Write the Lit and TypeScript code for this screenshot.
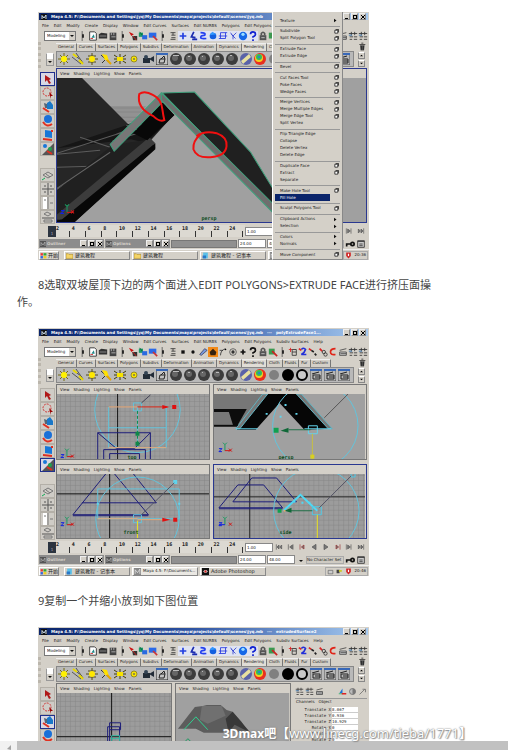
import { LitElement, html, svg, css, nothing } from "lit";
import { customElement, property } from "lit/decorators.js";
import { classMap } from "lit/directives/class-map.js";

const icon = (body: unknown) => html`<svg class="ico" viewBox="0 0 12 12" aria-hidden="true">${body}</svg>`;

/* ---------- status line glyphs ---------- */
const statusGlyphs: Record<string, unknown> = {
  doc: svg`<path d="M2 1h6l2 2v8H2z" fill="#fff" stroke="#222"/><path d="M4 8l3-4 1 4z" fill="#288"/><path d="M3 9h3" stroke="#c22"/>`,
  open: svg`<path d="M1 4l3-2 7 1v6H1z" fill="#333"/><path d="M2 6h8" stroke="#999"/>`,
  save: svg`<path d="M2 2h8v9H2z" fill="#444"/><path d="M4 2v3M7 2v3M4 7h5" stroke="#bbb"/>`,
  arrowRed: svg`<path d="M1 1l6 3-3 2z" fill="#c11"/><path d="M5 6h6v5H6z" fill="#333"/><path d="M6 6l4 5" stroke="#d22"/>`,
  cubes: svg`<path d="M1 2h5v5H1z" fill="#1a9a6a"/><path d="M5 5h6v5H5z" fill="#2a6ae0"/><path d="M2 1l3 4" stroke="#063"/>`,
  blueBox: svg`<path d="M1 2h9v6H1z" fill="#2a6ae8"/><path d="M6 6l5 5" stroke="#c33" stroke-width="2"/>`,
  mask: svg`<path d="M3 2h6M3 10h6M6 2v3M4 5h5M4 8h5" stroke="#333"/>`,
  plus: svg`<path d="M6 2v8M2 6h8" stroke="#2440e0" stroke-width="2"/>`,
  joint: svg`<path d="M7 1L4 7l5 1M5 10h6" stroke="#1c2cb0" stroke-width="2" fill="none"/>`,
  curve: svg`<path d="M3 2q7 0 5 3l-4 1q-3 4 6 3" stroke="#2440f0" stroke-width="2" fill="none"/>`,
  ball: svg`<circle cx="6" cy="6" r="4" fill="#1460e0"/><path d="M2 5l3-4 5 3" fill="#39f"/>`,
  lattice: svg`<path d="M3 2h8M1 9h8M3 2v7M9 2v7M1 6h10" stroke="#2436e0" fill="none"/>`,
  spray: svg`<path d="M3 2l3 4 4-4M6 6v4M4 4l5 5" stroke="#3040d0" fill="none"/>`,
  render: svg`<circle cx="6" cy="6" r="5" fill="#1668e8"/><circle cx="6" cy="4" r="2" fill="#9df"/>`,
  help: svg`<path d="M3 4q0-3 3-3t3 3q0 2-3 3v1M6 10v2" stroke="#1020d0" stroke-width="2" fill="none"/>`,
  helpBlack: svg`<path d="M3 4q0-3 3-3t3 3q0 2-3 3v1M6 10v2" stroke="#111" stroke-width="2" fill="none"/>`,
  lock: svg`<path d="M4 5V3q2-3 4 0v2" stroke="#555" fill="none" stroke-width="2"/><path d="M2 5h8v6H2z" fill="#555"/><path d="M4 8h4" stroke="#ccc"/>`,
  pick: svg`<path d="M1 2h7v7H1z" fill="#3a9a50"/><path d="M5 5l6 6" stroke="#c22" stroke-width="2"/>`,
  list: svg`<path d="M1 3h4M3 1v5" stroke="#d22"/><path d="M5 3h5v7H5zM5 6h5" stroke="#333" fill="none"/>`,
  two: svg`<path d="M4 3q3-3 5 0-1 4-5 6h6" stroke="#2330d8" stroke-width="2" fill="none"/><path d="M1 2l3 2" stroke="#d22" stroke-width="2"/>`,
  chain: svg`<path d="M1 2l3 2" stroke="#d22" stroke-width="2"/><path d="M4 4l3 2M8 8l2 2" stroke="#222" stroke-width="2"/>`,
  chain2: svg`<path d="M2 2l3 3" stroke="#d22" stroke-width="2"/><circle cx="7" cy="6" r="2" fill="none" stroke="#333"/><circle cx="9" cy="9" r="2" fill="none" stroke="#333"/>`,
  magnet: svg`<path d="M9 2Q3 2 3 6t6 3" stroke="#e02418" stroke-width="2" fill="none"/>`,
  clap: svg`<path d="M2 4l8-2M2 6h8v4H2z" stroke="#444" fill="#ccc"/><path d="M3 8h7" stroke="#444"/>`,
  grid: svg`<path d="M1 3h10M4 1v4M8 1v4M2 7h4M7 7h4M2 10h3M7 10h4" stroke="#333"/><path d="M1 5h4" stroke="#26a"/>`,
  dot: svg`<path d="M4 4h4v4H4z" fill="#111"/>`,
  disc: svg`<circle cx="6" cy="6" r="2" fill="#111"/>`,
  pen: svg`<path d="M2 9l6-7 3 2-7 6z" fill="#79d" stroke="#446"/>`,
  snap: svg`<path d="M0 0h12v12H0z" fill="#f28a18"/><path d="M6 2l4 4-1 4H3L2 6z" fill="#321"/>`,
  target: svg`<circle cx="6" cy="6" r="4" fill="none" stroke="#555"/><circle cx="6" cy="6" r="2" fill="#333"/>`,
  plusBlack: svg`<path d="M6 3v6M3 6h6" stroke="#111" stroke-width="2"/>`,
  spline: svg`<path d="M3 10q0-6 6-8M2 4h4" stroke="#333" fill="none"/><circle cx="9" cy="3" r="1"/>`,
  bar: svg`<path d="M5 0v12" stroke="#555"/><path d="M5 4h2v4H5z" fill="#111"/>`,
};
const leadGlyphs = ["bar", "doc", "open", "save", "bar", "arrowRed", "cubes", "blueBox", "bar", "mask"];
const objectGlyphs = ["plus", "joint", "curve", "ball", "lattice", "spray", "render", "help"];
const componentGlyphs = ["dot", "disc", "pen", "snap", "spline", "target", "plusBlack", "helpBlack"];
const tailGlyphs = ["lock", "pick", "bar", "list", "two", "chain", "chain2", "magnet", "clap", "grid", "grid"];

/* ---------- shelf glyphs ---------- */
const rays = "M6 0v12M0 6h12M2 2l8 8M10 2l-8 8";
const sphere = (top: string) => svg`<circle cx="6" cy="6" r="6" fill="#3c3c3c"/><circle cx="5" cy="5" r="3" fill="#666"/><path d=${top} fill="#bbb"/>`;
const clapper = svg`<path d="M0 0h12v12H0z" fill="#b8b8b8" stroke="#555"/><path d="M0 1h12" stroke="#3868b8" stroke-width="2"/><path d="M2 5l7-2M3 6h7v4H3zM5 8h5" stroke="#222" fill="none"/>`;
const shelfGlyphs = [
  svg`<path d=${rays} stroke="#776a10"/><circle cx="6" cy="6" r="3" fill="#fff200"/>`,
  svg`<path d="M1 1l9 7M4 0l7 10M0 4l9 7" stroke="#555"/><path d="M1 1l4 3M7 7l4 4" stroke="#e8d800" stroke-width="2"/>`,
  svg`<path d="M6 0v12M0 6h12M2 3h8M2 9h8" stroke="#554c10"/><circle cx="6" cy="6" r="3" fill="#ffe800"/>`,
  svg`<path d="M1 2l10 9M2 10l5-5" stroke="#333"/><path d="M2 1l5 1 2 6-4-1z" fill="#ffe100"/><path d="M7 7l4 4" stroke="#e8a800" stroke-width="2"/>`,
  svg`<path d="M0 2l12 8M12 2L0 10M0 6h12M6 1v10" stroke="#443c00"/><path d="M3 4h6v4H3z" fill="#f8e400"/>`,
  svg`<circle cx="6" cy="6" r="3" fill="#f8e400" stroke="#998c20"/><circle cx="6" cy="6" r="1" fill="#775"/>`,
  svg`<path d="M1 5h7v5H1z" fill="#222c38"/><path d="M7 6l5-3v6z" fill="#222c38"/><circle cx="4" cy="4" r="2" fill="#345"/>`,
  svg`<path d="M0 0h12v12H0z" fill="#c4c4c4" stroke="#222"/><path d="M0 1h12" stroke="#3868b8" stroke-width="2"/><path d="M3 10l1-4h5l-1 4zM5 6l3-3 1 3" stroke="#222" fill="none"/>`,
  sphere("M3 2h6v1H3z"),
  sphere("M4 3h2v1H4z"),
  sphere("M4 3h1v1H4z"),
  sphere("M4 3h3v1H4z"),
  sphere("M4 2h2v1H4z"),
  svg`<circle cx="6" cy="6" r="6" fill="#5a62a8"/><path d="M1 8l8-7 2 3-8 7z" fill="#e8e0a0"/>`,
  svg`<circle cx="6" cy="6" r="6" fill="#e83020"/><circle cx="5" cy="5" r="4" fill="#f0d020"/><circle cx="5" cy="4" r="3" fill="#30b860"/><circle cx="5" cy="4" r="1" fill="#2878e0"/>`,
  svg`<circle cx="6" cy="6" r="5" fill="#808080"/>`,
  svg`<circle cx="6" cy="6" r="6" fill="#000"/>`,
  svg`<circle cx="6" cy="6" r="5" fill="#c8c8c8" stroke="#000" stroke-width="2"/>`,
  clapper,
  clapper,
  clapper,
];

/* ---------- toolbox glyphs ---------- */
const toolGlyphs = [
  { name: "Select", body: svg`<path d="M3 2l6 4-2 1 2 3-2 1-2-4-2 2z" fill="#b01818"/>` },
  { name: "Lasso", body: svg`<circle cx="5" cy="5" r="4" fill="none" stroke="#d03838" stroke-dasharray="2 1"/><path d="M7 5l4 4-2 0 0 3z" fill="#900"/>` },
  { name: "Move", body: svg`<path d="M5 2l3-2 3 4v4H5z" fill="#1a78c8"/><path d="M2 2l3 1v4H3z" fill="#567"/><path d="M1 7l6 4" stroke="#e03020" stroke-width="2"/>` },
  { name: "Rotate", body: svg`<circle cx="6" cy="4" r="4" fill="#1a70d8"/><path d="M1 7q4 6 9 2" stroke="#e03020" stroke-width="2" fill="none"/>` },
  { name: "Scale", body: svg`<path d="M3 1l7 1v7l-7-1z" fill="#1878d8"/><path d="M1 10l9 1M9 2l2 0" stroke="#e03020" stroke-width="2"/>` },
  { name: "Manipulator", body: svg`<path d="M0 12L12 0v12z" fill="#555"/><circle cx="3" cy="3" r="2" fill="#1878d8"/><circle cx="8" cy="6" r="2" fill="#20a050"/><path d="M5 8l5 3" stroke="#e03020" stroke-width="2"/>` },
];
const layoutGlyphs = [
  svg`<path d="M1 6l5-3 5 3-5 3zM4 5l4 3" fill="none" stroke="#777"/><path d="M0 11l3-2" stroke="#1a5"/>`,
  svg`<path d="M6 0v12M0 6h12M2 3h2M8 3h2M2 9h2M8 9h2" stroke="#555"/>`,
  svg`<path d="M1 0h4v12H1z" fill="#fff"/><path d="M6 0v12M8 6h3M2 3h2" stroke="#777"/>`,
  svg`<path d="M0 7h12" stroke="#555"/><path d="M2 3l3-2 4 2-3 2zM2 9h8v2H2z" fill="none" stroke="#777"/>`,
];

/* ---------- viewport drawings ---------- */
const axes = (x: number, y: number, side = false) => svg`
  <g fill="none">
    <path d="M${x} ${y}v-6" stroke="#1a9a60"/>
    <path d=${side ? `M${x} ${y}h-6` : `M${x} ${y}h6`} stroke=${side ? "#1020e0" : "#d01818"}/>
    <path d="M${x - 2} ${y - 8}l2 2 2-2" stroke="#1a9a60"/>
    <path d="M${x - 6} ${y - 2}h3l-3 3h3" stroke="#1020e0"/>
    <path d="M${x + 4} ${y - 2}l3 3m0-3l-3 3" stroke="#d01818"/>
  </g>`;
const grid = (id: string) => svg`
  <defs><pattern id=${id} width="5" height="5" patternUnits="userSpaceOnUse">
    <path d="M0 0h5v5H0z" fill="#9c9c9c"/><path d="M0 0v5M0 0h5" stroke="#868686"/>
  </pattern></defs>`;

const roofScene = svg`
  <path d="M57 78h308v146H57z" fill="#a0a0a0"/>
  <path d="M98 106h48l-18 20h-8z" fill="#929292"/>
  <path d="M104 108h40M108 112h33M112 117h26M117 121h18" stroke="#858585"/>
  <path d="M57 78h25l46 46 33-12 12 3-25 28-91 81z" fill="#262626"/>
  <path d="M57 148l72-24 36-14 9 5-28 28-15-4z" fill="#161616"/>
  <path d="M57 153l75-24M57 167l34-1M57 189l62-38M80 137l30 10M126 125l24 10M116 134l40-15M112 141l38-12M100 150l-43 4" stroke="#5c5c5c" fill="none"/>
  <path d="M57 190l55-45 38-6 5 8-83 77H57z" fill="#202020"/>
  <path d="M57 188l53-36" stroke="#666"/>
  <path d="M149 137l6 6-93 76-5 0v-5z" fill="#3c3c3c"/>
  <path d="M155 143v6L72 224H57v-4l5-1z" fill="#080808"/>
  <path d="M162 102l12 13-27 25-14-7z" fill="#080808"/>
  <path d="M161 93l4 6-51 52-4-7z" fill="#777" stroke="#3fa07c"/>
  <path d="M162 93l32-1 56 60 22 36v18z" fill="#202020" stroke="#3fa07c"/>
  <path d="M161 93l111 110v9L161 100z" fill="#6e6e6e" stroke="#3fa07c"/>
  <path d="M139 94q5-4 14 1 8 4 9 14 1 7 2 11-5 2-11-4-17-8-14-22z" fill="none" stroke="#f01010" stroke-width="2"/>
  <path d="M196 136q8-6 20-3 11 4 10 13-1 10-16 11-14 1-17-8-1-8 7-15" fill="none" stroke="#f01010" stroke-width="2"/>
  ${axes(67, 212)}
  <text class="cam" x="201" y="220">persp</text>`;

const topScene = svg`${grid("g-top")}
  <path d="M57 393h156v70H57z" fill="url(#g-top)"/>
  <path d="M118 393v70" stroke="#111" stroke-width="1"/>
  <g fill="none" stroke="#62c4dc"><circle cx="138" cy="409" r="43"/><path d="M109 406v41h58v-41M109 427h58M138 406v41M134 402h8v8h-8z"/></g>
  <path d="M98 432h53v32H98zM98 432l19 16h18l16-16M104 463v-14h42v14M110 463v-10h30v10" stroke="#1c1c78" fill="none"/>
  <path d="M109 406h29M109 447h58" stroke="#e8a878"/>
  <path d="M138 410v35" stroke="#108848" stroke-dasharray="3 2"/><path d="M136 431h4v4h-4zM136 441h4v4h-4z" fill="#108848"/>
  <path d="M138 406h30" stroke="#e02818"/><path d="M163 404l7 2-7 2zM173 404h4v4h-4z" fill="#e01010"/>
  <path d="M142 402l9-8" stroke="#445"/>
  ${axes(67, 456)}<text class="cam" x="128" y="458">top</text>`;

const perspScene = svg`
  <path d="M215 393h152v70H215z" fill="#a0a0a0"/>
  <path d="M215 393h55l-28 31h-27z" fill="#777"/>
  <path d="M215 408h33l-9 16h-5l-4-13h-15zM215 424h26v2h-26z" fill="#0c0c0c"/>
  <path d="M264 393h35l34 35-27 1-25-27-24 27h-19z" fill="#060606"/>
  <path d="M264 393h5l-28 35-4 0zM298 393h5l31 35h-4z" fill="#777" stroke="#62b4c4"/>
  <circle cx="317" cy="425" r="43" fill="none" stroke="#62c4dc"/>
  <path d="M237 428h22M306 428h27M310 425h9v8h-9z" fill="none" stroke="#62d4ec"/>
  <path d="M286 403h2v2h-2zM297 412h2v2h-2zM281 415h2v2h-2zM267 412h2v2h-2z" fill="#62d4ec"/>
  <path d="M290 429h22" stroke="#207048"/><path d="M275 427h5v5h-5z" fill="#10a050"/><path d="M282 430l8-3v5z" fill="#106838"/>
  <path d="M326 417l24-24" stroke="#555"/><path d="M314 433v30" stroke="#c8c040"/><path d="M312 454h4v4h-4z" fill="#d8d020"/>
  ${axes(226, 450)}<text class="cam" x="280" y="458">persp</text>`;

const frontScene = svg`${grid("g-front")}
  <path d="M57 474h156v66H57z" fill="url(#g-front)"/>
  <path d="M110 474v66M57 494h156" stroke="#111"/>
  <path d="M106 474l-33 41h76l-34-41M134 474l23 29H82M73 516h76" stroke="#1c1c78" fill="none"/>
  <g fill="none" stroke="#62c4dc"><circle cx="138" cy="519" r="42"/><path d="M98 489h82v30H98zM134 515h8v8h-8z"/></g>
  <path d="M174 480h4v4h-4zM179 503h2v2h-2zM97 503h2v2h-2z" fill="#62d4ec"/>
  <path d="M142 515l33-32" stroke="#556"/>
  <path d="M98 519h40" stroke="#e8a878"/><path d="M138 520h30" stroke="#e8a878"/><path d="M163 518l8 2-8 2zM174 518h4v4h-4z" fill="#e01010"/>
  <path d="M138 521v19" stroke="#e8e020"/>
  ${axes(67, 525)}<text class="cam" x="124" y="534">front</text>`;

const sideScene = svg`${grid("g-side")}
  <path d="M215 474h152v66H215z" fill="url(#g-side)"/>
  <path d="M251 474v66M215 497h152" stroke="#222"/>
  <path d="M220 508l19-23h26l19 23zM234 502l19-24h25l20 24zM220 509h64" stroke="#1c1c78" fill="none"/>
  <circle cx="318" cy="511" r="43" fill="none" stroke="#62c4dc"/>
  <path d="M285 511l17-16 17 16" fill="none" stroke="#50d8f4" stroke-width="2"/>
  <path d="M314 507h9v8h-9zM353 473h4v4h-4z" fill="none" stroke="#50c8e4"/>
  <path d="M295 501h2v2h-2zM303 502h2v2h-2zM310 502h2v2h-2z" fill="#50d8f4"/>
  <path d="M292 511h22" stroke="#207048"/><path d="M279 509h4v4h-4z" fill="#10a050"/><path d="M286 511l7-3v5z" fill="#106838"/><circle cx="286" cy="511" r="1" fill="#e8a860"/>
  <path d="M321 508l32-32" stroke="#556"/><path d="M319 515v24" stroke="#e8e020"/>
  ${axes(226, 525, true)}<text class="cam" x="281" y="534">side</text>`;

const planScene = svg`${grid("g-plan")}
  <path d="M57 692h120v150H57z" fill="url(#g-plan)"/>
  <path d="M112 692v150M57 736h120" stroke="#111"/>
  <path d="M110 722h11v7h-11zM108 726h12v16h-12zM110 729v12" fill="none" stroke="#1c1c78"/>
  <path d="M112 735h8v6h-8zM112 738h8" fill="none" stroke="#30b8a0"/>`;

const houseScene = svg`
  <path d="M179 692h114v150H179z" fill="#a0a0a0"/>
  <path d="M181 728l17-22 8-1 4-1h14l6 5 6 2 9 10 9 14-17-5-10-2v4h-20l-8-4z" fill="#5c5c5c"/>
  <path d="M205 705h20l4 10-18 8-8-4z" fill="#707070"/>
  <path d="M236 711l18 21-16-8-6 8-3-14z" fill="#383838"/>
  <path d="M187 729l12-13 12 13" fill="none" stroke="#30d090"/>
  <path d="M188 741l3-3 3 3" stroke="#1a9a60" fill="none"/>`;

interface Pane { box: string; drawing: unknown; active?: boolean; }

type Command = { label: string; box?: boolean; sub?: boolean; on?: boolean };
const polygonMenu: Command[][] = [
  [{ label: "Texture", sub: true }],
  [{ label: "Subdivide", box: true }, { label: "Split Polygon Tool", box: true }],
  [{ label: "Extrude Face", box: true }, { label: "Extrude Edge", box: true }],
  [{ label: "Bevel", box: true }],
  [{ label: "Cut Faces Tool", box: true }, { label: "Poke Faces", box: true }, { label: "Wedge Faces", box: true }],
  [{ label: "Merge Vertices", box: true }, { label: "Merge Multiple Edges", box: true }, { label: "Merge Edge Tool", box: true }, { label: "Split Vertex" }],
  [{ label: "Flip Triangle Edge" }, { label: "Collapse" }, { label: "Delete Vertex" }, { label: "Delete Edge" }],
  [{ label: "Duplicate Face", box: true }, { label: "Extract", box: true }, { label: "Separate" }],
  [{ label: "Make Hole Tool", box: true }, { label: "Fill Hole", on: true }],
  [{ label: "Sculpt Polygons Tool", box: true }],
  [{ label: "Clipboard Actions", sub: true }, { label: "Selection", sub: true }],
  [{ label: "Colors", sub: true }, { label: "Normals", sub: true }],
  [{ label: "Move Component", box: true }],
];

@customElement("maya-window")
export class MayaWindow extends LitElement {
  @property() selection = "";
  @property() clock = "";
  @property({ type: Number }) tool = 0;
  @property({ type: Boolean }) components = false;
  @property({ type: Boolean }) menuOpen = false;
  @property({ type: Boolean }) channels = false;
  @property({ type: Boolean }) timeline = false;
  @property({ attribute: false }) panes: Pane[] = [];
  @property({ attribute: false }) tasks: { label: string; kind: string; on?: boolean }[] = [];

  static styles = css`
    :host { display: flex; flex-direction: column; position: relative; overflow: hidden;
      background: #d4d0c8; color: #222; font: 4px/6px "DejaVu Sans", "Noto Sans CJK SC", sans-serif; white-space: nowrap; }
    * { box-sizing: border-box; }
    button, input, select { font: inherit; color: inherit; margin: 0; padding: 0; border: 0; background: none; border-radius: 0; min-width: 0; }
    svg { display: block; }
    .ico { width: 10px; height: 10px; flex: none; }
    .title { display: flex; align-items: center; height: 9px; flex: none; gap: 4px; padding: 0 2px; border: 1px solid #d4d0c8;
      background: linear-gradient(90deg, #0a246a, #2a50a0 45%, #a6caf0); color: #fff; font-weight: bold; }
    .title .ico { width: 6px; height: 6px; }
    .caps { margin-left: auto; display: flex; gap: 1px; }
    .cap { width: 7px; height: 7px; background: #d4d0c8; border: 1px solid #888; border-top-color: #eee; border-left-color: #eee; display: grid; place-items: center; }
    .cap svg { width: 4px; height: 4px; }
    .menus { display: flex; gap: 5px; height: 9px; flex: none; align-items: center; padding-left: 4px; }
    .status { display: flex; height: 12px; flex: none; align-items: center; padding: 0 3px 0 6px; }
    .picker { position: relative; width: 32px; height: 10px; display: flex; flex: none; }
    .picker select { appearance: none; width: 100%; background: #fff; border: 1px solid #777; padding-left: 2px; }
    .picker i { position: absolute; right: 1px; top: 1px; width: 6px; height: 8px; background: #d4d0c8; display: grid; place-items: center; }
    .picker i::after, .down::after { content: ""; border: 2px solid transparent; border-top-color: #111; border-bottom: 0; }
    .tools { flex: 1; display: flex; justify-content: space-between; padding-left: 2px; }
    .tools button.lit { background: #dfe3f2; }
    .bench { display: flex; height: 26px; flex: none; }
    .gutter { width: 18px; flex: none; border-left: 3px dotted #bbb6ac; display: flex; align-items: flex-end; padding: 0 2px 2px 5px; }
    .down { width: 9px; height: 13px; border: 1px solid #999; border-top-color: #fff; background: linear-gradient(#fff 45%, #d4d0c8 0); display: grid; place-items: end center; padding-bottom: 2px; }
    .shelves { flex: 1; min-width: 0; }
    .tabs { display: flex; height: 9px; align-items: center; }
    .tabs button { padding: 0 2px; height: 8px; border-right: 1px solid #777; border-top: 1px solid #eee; }
    .tabs button.on { background: #e0ddd6; }
    .shelf { display: flex; height: 16px; border: 1px solid #888; background: #b9b9b9; }
    .shelf button { width: 14px; height: 14px; flex: none; display: grid; place-items: center; }
    .shelf .ico { width: 12px; height: 12px; }
    .ends { width: 15px; flex: none; display: flex; flex-direction: column; align-items: center; gap: 1px; }
    .ends .ico { width: 8px; height: 9px; }
    .ends button { width: 7px; height: 7px; border: 1px solid #888; border-top-color: #fff; display: grid; place-items: center; }
    .ends button svg { width: 3px; height: 3px; }
    .body { display: flex; height: 156px; flex: none; }
    .toolbox { width: 18px; flex: none; display: flex; flex-direction: column; padding: 4px 1px 0 2px; }
    .toolbox button { height: 14px; width: 15px; flex: none; display: grid; place-items: center; border: 1px solid #b4b0a8; background: #cfccc6; }
    .toolbox button.on { border-color: #20308c; background: #d8d8e4; }
    .toolbox .ico { width: 12px; height: 12px; }
    .toolbox hr { border: 0; margin: 0; flex: 1; }
    .panes { flex: 1; min-width: 0; display: grid; gap: 4px 3px; padding: 0 2px 1px 0; grid-auto-rows: minmax(0, 1fr); }
    .two { grid-template-columns: 1fr 1fr; }
    .pane { min-width: 0; display: flex; flex-direction: column; border: 1px solid #777; }
    .pane.active { border-color: #101c74; outline: 1px solid #2a3890; outline-offset: -1px; }
    .pane nav { height: 8px; flex: none; display: flex; gap: 4px; padding-left: 2px; align-items: center; background: #d4d0c8; margin: 1px 1px 0; }
    .view { flex: 1; min-height: 0; width: 100%; }
    .cam { font: bold 5px "DejaVu Sans Mono", monospace; fill: #0c4c20; }
    .time { display: flex; height: 14px; flex: none; padding: 1px 2px 1px 10px; align-items: center; }
    .now { width: 8px; height: 11px; background: #2c3440; color: #aab; display: grid; place-items: end center; flex: none; }
    .ticks { flex: 1; height: 12px; display: flex; font: bold 5px/6px "DejaVu Sans Mono", monospace; background: #dcd9d2; }
    .ticks span { flex: 1; background: linear-gradient(#333, #333) 13px 6px / 1px 6px no-repeat; }
    .box { background: #fff; border: 1px solid #888; width: 28px; height: 9px; padding-left: 1px; flex: none; }
    .play { display: flex; width: 94px; justify-content: space-around; flex: none; }
    .play .ico { width: 8px; height: 8px; }
    .range { display: flex; height: 11px; flex: none; align-items: center; gap: 1px; padding: 0 3px 0 1px; }
    .mini { width: 65px; height: 9px; flex: none; display: flex; gap: 1px; align-items: center; background: #8c8c8c; color: #d4d0c8; padding: 0 1px; font-weight: bold; }
    .mini .ico { width: 6px; height: 6px; }
    .slider { flex: 1; height: 8px; background: #909090; border: 1px solid #777; }
    .charset { width: 38px; background: #cfcbc3; border: 1px solid #aaa; flex: none; }
    .range .down { height: 6px; background: none; border: 0; padding: 0 0 1px; }
    .bar { display: flex; height: 11px; flex: none; align-items: center; gap: 2px; padding: 0 1px; border-top: 1px solid #eee; font-size: 5px; }
    .bar button { height: 9px; display: flex; align-items: center; gap: 1px; border: 1px solid #888; border-top-color: #fff; border-left-color: #fff; }
    .bar .start { margin-right: 3px; flex: none; }
    .bar .task { flex: 0 1 66px; gap: 2px; padding: 0 1px; }
    .bar .task.on { background: #eae8e3; font-size: 4px; }
    .bar .ico { width: 7px; height: 7px; }
    .tray { margin-left: auto; flex: none; display: flex; gap: 2px; align-items: center; border: 1px solid #aaa; padding: 0 1px; height: 9px; font-size: 4px; }
    .popup { position: absolute; top: 0; bottom: 0; left: 234px; width: 71px; background: #d4d0c8; border: 1px solid #888; border-left-color: #fff;
      border-top: 0; display: flex; flex-direction: column; padding: 5px 2px 1px; }
    .popup button { height: 7px; flex: none; display: flex; align-items: center; justify-content: space-between; padding: 0 1px 0 5px; text-align: left; }
    .popup button.on { background: #0a246a; color: #fff; margin-right: 10px; }
    .popup .ico { width: 5px; height: 5px; }
    .popup hr { flex: 1; border: 0; margin: 0; background: linear-gradient(#999, #999) 0 2px / 100% 1px no-repeat; }
    .channels { width: 76px; flex: none; padding: 2px 2px 0; }
    .chicons { display: flex; gap: 1px; height: 13px; align-items: center; }
    .chicons .ico { width: 9px; height: 9px; }
    .chicons .push { margin-left: auto; }
    .chhead { display: flex; gap: 4px; height: 9px; padding-left: 1px; border-top: 1px solid #999; }
    .chrow { display: flex; height: 6px; font: 4px/6px "DejaVu Sans Mono", monospace; }
    .chrow label { width: 37px; text-align: right; padding-right: 1px; }
    .chrow input { width: 26px; background: #fff; border-bottom: 1px solid #ccc; }
  `;

  private glyphs(names: string[], lit = false) {
    return names.map((n) => html`<button class=${classMap({ lit })} aria-label=${n}>${icon(statusGlyphs[n])}</button>`);
  }

  private caps() {
    return html`<span class="caps">
      <button class="cap" aria-label="Minimize"><svg viewBox="0 0 4 4"><path d="M0 3h3v1H0z"/></svg></button>
      <button class="cap" aria-label="Maximize"><svg viewBox="0 0 4 4"><path d="M0 0h4v4H0zM1 1v2h2V1z" fill-rule="evenodd"/></svg></button>
      <button class="cap" aria-label="Close"><svg viewBox="0 0 4 4"><path d="M0 0l4 4M4 0L0 4" stroke="#000"/></svg></button>
    </span>`;
  }

  private renderPane(p: Pane) {
    return html`<section class=${classMap({ pane: true, active: !!p.active })}>
      <nav>${["View", "Shading", "Lighting", "Show", "Panels"].map((m) => html`<button>${m}</button>`)}</nav>
      <svg class="view" viewBox=${p.box} preserveAspectRatio="xMinYMin slice">${p.drawing}</svg>
    </section>`;
  }

  private renderChannels() {
    const rows = [["Translate X", "8.067"], ["Translate Y", "0.936"], ["Translate Z", "10.929"], ["Rotate X", "0"], ["Rotate Y", "0"], ["Rotate Z", "0"]];
    return html`<aside class="channels">
      <div class="chicons">${["grid", "grid", "clap"].map((n) => icon(statusGlyphs[n]))}
        <span class="push">${icon(svg`<path d="M2 8l4-6v6z" fill="#1a70d8"/><path d="M1 9h5" stroke="#1a5"/><path d="M5 9h6" stroke="#d22" stroke-width="2"/>`)}</span>
        ${icon(svg`<circle cx="6" cy="6" r="4" fill="#bbb" stroke="#666"/><path d="M6 2v8a4 4 0 0 0 0-8" fill="#777"/>`)}
        ${icon(svg`<path d="M2 10l7-7M6 3h4v4" stroke="#666" fill="none"/>`)}
      </div>
      <div class="chhead"><span>Channels</span><span>Object</span></div>
      ${rows.map(([k, v], i) => html`<div class="chrow"><label for="ch${i}">${k}</label><input id="ch${i}" .value=${v} /></div>`)}
    </aside>`;
  }

  private renderPopup() {
    return html`<div class="popup" role="menu">
      ${polygonMenu.map((group, g) => html`${g ? html`<hr />` : nothing}${group.map((c) => html`
        <button role="menuitem" class=${classMap({ on: !!c.on })}>${c.label}
          ${c.box ? icon(svg`<path d="M2 3h7v7H2z" fill="#fff" stroke="#222" stroke-width="2"/><path d="M4 1h7v7" fill="none" stroke="#222" stroke-width="2"/>`) : nothing}
          ${c.sub ? icon(svg`<path d="M0 2l6 4-6 4z" fill="#111"/>`) : nothing}
        </button>`)}`)}
    </div>`;
  }

  private renderTimeline() {
    const play = ["M2 2v8M6 3L3 6l3 3zM10 3L7 6l3 3z", "M2 2v8M9 2v8M8 3L4 6l4 3z", "M3 2v8M9 3L5 6l4 3z", "M9 2L3 6l6 4z", "M3 2l6 4-6 4z", "M9 2v8M3 3l4 3-4 3z", "M2 2v8M9 2v8M4 3l4 3-4 3z", "M10 2v8M2 3l3 3-3 3zM6 3l3 3-3 3z"];
    return html`
      <div class="time">
        <span class="now">1</span>
        <div class="ticks">${Array.from({ length: 12 }, (_, i) => html`<span>${(i + 1) * 2}</span>`)}</div>
        <input class="box" aria-label="Current time" .value=${"1.00"} />
        <div class="play">${play.map((d, i) => html`<button aria-label="Playback ${i + 1}">${icon(svg`<path d=${d} fill="#777" stroke=${i === 2 || i === 5 ? "#933" : "#555"}/>`)}</button>`)}</div>
      </div>
      <div class="range">
        ${["Outliner", "Options"].map((n) => html`<div class="mini">${icon(svg`<path d="M0 0h12v12H0z" fill="#555"/><path d="M2 10V3l4 5 4-6v8" stroke="#ddd" fill="none"/>`)}${n}${this.caps()}</div>`)}
        <div class="slider"></div>
        <input class="box" aria-label="Playback end" .value=${"24.00"} />
        <input class="box" aria-label="Range end" .value=${"48.00"} />
        <button class="down" aria-label="Character set menu"></button>
        <span class="charset">No Character Set</span>
        ${icon(svg`<path d="M1 6h6M2 6v3" stroke="#111" stroke-width="2"/><circle cx="9" cy="6" r="2" fill="none" stroke="#111" stroke-width="2"/>`)}
        ${icon(svg`<path d="M2 2h8v8H2z" fill="#ccc" stroke="#333"/><path d="M2 3h8M4 6h4M4 8h4" stroke="#333"/>`)}
      </div>
      <footer class="bar">
        <button class="start">${icon(svg`<path d="M1 2h4v4H1z" fill="#e33"/><path d="M6 2h5v4H6z" fill="#3a3"/><path d="M1 7h4v4H1z" fill="#36d"/><path d="M6 7h5v4H6z" fill="#ec2"/>`)}开始</button>
        ${this.tasks.map((t) => html`<button class=${classMap({ task: true, on: !!t.on })}>
          ${icon(t.kind === "folder" ? svg`<path d="M0 3h4l1 1h7v7H0z" fill="#f4d468" stroke="#a88420"/>`
            : t.kind === "note" ? svg`<path d="M2 1h8v10H2z" fill="#5ac0e8"/><path d="M1 6h6v5H1z" fill="#2878c8"/>`
            : t.kind === "maya" ? svg`<path d="M0 0h12v12H0z" fill="#888"/><path d="M2 10V3l4 5 4-6v8" stroke="#fff" fill="none"/>`
            : svg`<path d="M0 0h12v12H0z" fill="#111"/><path d="M2 6q4-5 8 0-4 5-8 0" fill="#eee"/><circle cx="6" cy="6" r="2" fill="#c22"/>`)}${t.label}</button>`)}
        <span class="tray">${this.menuOpen ? nothing : icon(svg`<path d="M2 4h8v6H2z" fill="#ccc" stroke="#555"/>`)}${this.menuOpen ? nothing : icon(svg`<path d="M1 3h5v6H1z" fill="#444"/><path d="M5 5h5" stroke="#cc2" stroke-width="3"/>`)}${icon(svg`<path d="M2 1h8v6l-4 4-4-4z" fill="#d02828"/><path d="M5 3h2v4H5z" fill="#fff"/>`)}${this.clock}</span>
      </footer>`;
  }

  render() {
    const menus = ["File", "Edit", "Modify", "Create", "Display", "Window", "Edit Curves", "Surfaces", "Edit NURBS", "Polygons", "Edit Polygons", "Subdiv Surfaces", "Help"];
    const tabs = ["General", "Curves", "Surfaces", "Polygons", "Subdivs", "Deformation", "Animation", "Dynamics", "Rendering", "Cloth", "Fluids", "Fur", "Custom"];
    return html`
      <header class="title">${icon(svg`<path d="M0 0h12v12H0z" fill="#111"/><path d="M2 10V3l4 5 4-6v8" stroke="#cde" stroke-width="2" fill="none"/>`)}
        <span>Maya 4.5: F:\\Documents and Settings\\jyq\\My Documents\\maya\\projects\\default\\scenes\\jyq.mb</span>
        ${this.selection ? html`<span>---</span><span>${this.selection}</span>` : nothing}${this.caps()}
      </header>
      <nav class="menus">${menus.map((m) => html`<button>${m}</button>`)}</nav>
      <div class="status">
        <span class="picker"><select aria-label="Menu set"><option>Modeling</option></select><i></i></span>
        <div class="tools">
          ${this.glyphs(leadGlyphs)}${this.glyphs(this.components ? componentGlyphs : objectGlyphs, !this.components)}${this.glyphs(tailGlyphs)}
        </div>
      </div>
      <div class="bench">
        <div class="gutter"><button class="down" aria-label="Shelf menu"></button></div>
        <div class="shelves">
          <div class="tabs">${tabs.map((t) => html`<button class=${classMap({ on: t === "Rendering" })}>${t}</button>`)}</div>
          <div class="shelf">${shelfGlyphs.map((g, i) => html`<button aria-label="Shelf item ${i + 1}">${icon(g)}</button>`)}</div>
        </div>
        <div class="ends">
          ${icon(svg`<path d="M3 4h7l-1 8H4z" fill="#555"/><path d="M2 3h9M5 1h3M5 5v6M8 5v6" stroke="#111"/>`)}
          <button aria-label="Up"><svg viewBox="0 0 4 4"><path d="M0 3l2-2 2 2z"/></svg></button>
          <button aria-label="Down"><svg viewBox="0 0 4 4"><path d="M0 1l2 2 2-2z"/></svg></button>
        </div>
      </div>
      <div class="body">
        <div class="toolbox">
          ${toolGlyphs.map((t, i) => html`<button class=${classMap({ on: i === this.tool })} aria-label=${t.name}>${icon(t.body)}</button>`)}
          <hr />
          ${layoutGlyphs.map((g, i) => html`<button aria-label="Layout ${i + 1}">${icon(g)}</button>`)}
        </div>
        <div class=${classMap({ panes: true, two: this.panes.length > 1 })}>${this.panes.map((p) => this.renderPane(p))}</div>
        ${this.channels ? this.renderChannels() : nothing}
      </div>
      ${this.timeline ? this.renderTimeline() : nothing}
      ${this.menuOpen ? this.renderPopup() : nothing}`;
  }
}

@customElement("app-root")
export class AppRoot extends LitElement {
  static styles = css`
    :host { display: flex; flex-direction: column; height: 100vh; position: relative; overflow: hidden; background: #fff; color: #444;
      font: 11px/17px "Noto Sans", "Noto Sans CJK SC", sans-serif; }
    main { flex: 1; min-height: 0; overflow: hidden; padding: 12px 17px 0; }
    p { margin: 16px 0 18px; text-indent: 21px; max-width: 420px; }
    maya-window { margin-left: 21px; width: 331px; max-width: calc(100% - 21px); }
    .scroll { flex: none; height: 9px; display: flex; background: #f1f1f1; }
    .scroll button { width: 17px; border: 0; padding: 0; background: none; display: grid; place-items: end center; }
    .scroll svg { width: 4px; height: 5px; display: block; }
    .thumb { flex: 1; background: #c1c1c1; }
    .mark { position: absolute; right: 36px; bottom: 8px; display: flex; align-items: baseline; color: #fff; font-size: 13px; line-height: 17px; white-space: nowrap;
      text-shadow: 0 0 1px #777, 0 0 2px #888, 1px 1px 1px #999; }
    .mark b { font-size: 12px; text-shadow: 0 0 2px #777, 1px 1px 1px #888; }
  `;

  render() {
    const first: Pane[] = [{ box: "57 78 308 145", drawing: roofScene, active: true }];
    const second: Pane[] = [
      { box: "57 393 153 66", drawing: topScene },
      { box: "215 393 153 66", drawing: perspScene },
      { box: "57 474 153 66", drawing: frontScene },
      { box: "215 474 153 66", drawing: sideScene, active: true },
    ];
    const third: Pane[] = [
      { box: "57 692 115 145", drawing: planScene },
      { box: "179 692 115 145", drawing: houseScene },
    ];
    return html`
      <main>
        <maya-window clock="20:36" menuOpen timeline .tasks=${[
          { label: "建筑教程", kind: "folder" },
          { label: "建筑教程", kind: "folder" },
          { label: "建筑教程 - 记事本", kind: "note" },
          { label: "Maya 4.5: F:\\Documents...", kind: "maya", on: true },
        ]} .panes=${first}></maya-window>
        <p>8选取双坡屋顶下边的两个面进入EDIT POLYGONS&gt;EXTRUDE FACE进行挤压面操作。</p>
        <maya-window clock="20:46" selection="polyExtrudeFace1..." components timeline .tool=${5} .tasks=${[
          { label: "建筑教程 - 记事本", kind: "note" },
          { label: "Maya 4.5: F:\\Documents...", kind: "maya", on: true },
          { label: "Adobe Photoshop", kind: "photo" },
        ]} .panes=${second}></maya-window>
        <p>9复制一个并缩小放到如下图位置</p>
        <maya-window selection="extrudedSurface2" channels .tool=${2} .panes=${third}></maya-window>
      </main>
      <div class="mark"><b>3Dmax吧</b><span>【www.linecg.com/tieba/1771】</span></div>
      <div class="scroll"><button aria-label="Scroll left"><svg viewBox="0 0 4 5"><path d="M4 0v5L0 4z" fill="#a3a3a3"/></svg></button><div class="thumb"></div></div>`;
  }
}
